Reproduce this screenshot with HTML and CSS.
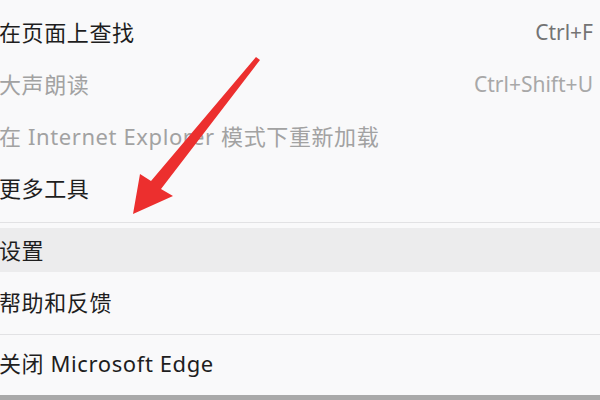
FILE: index.html
```html
<!DOCTYPE html>
<html lang="zh-CN">
<head>
<meta charset="utf-8">
<title>Edge 菜单</title>
<link rel="stylesheet" href="styles.css">
</head>
<body>
<div class="page">
  <div class="menu">
    <div class="group first">
      <div class="item"><span class="label">在页面上查找</span><span class="key">Ctrl+F</span></div>
      <div class="item disabled"><span class="label">大声朗读</span><span class="key">Ctrl+Shift+U</span></div>
      <div class="item disabled"><span class="label">在 Internet Explorer 模式下重新加载</span></div>
      <div class="item"><span class="label">更多工具</span></div>
    </div>
    <div class="sep sep-a"></div>
    <div class="group">
      <div class="item active"><span class="label">设置</span></div>
      <div class="item"><span class="label">帮助和反馈</span></div>
    </div>
    <div class="sep sep-b"></div>
    <div class="group">
      <div class="item"><span class="label">关闭 Microsoft Edge</span></div>
    </div>
  </div>
  <div class="bottom-band"></div>
  <svg class="arrow" width="600" height="400" viewBox="0 0 600 400" aria-hidden="true">
    <polygon points="256,57 260,60 161,189 173,196 133,214 140,174 151,181" fill="#ec2f2e"/>
  </svg>
</div>
</body>
</html>
```
FILE: styles.css
```css
html, body {
  margin: 0;
  padding: 0;
}
body {
  width: 600px;
  height: 400px;
  overflow: hidden;
  background: #f9f9fa;
  font-family: "Noto Sans", "Noto Sans CJK SC", sans-serif;
}
.page {
  position: relative;
  width: 600px;
  height: 400px;
  display: flex;
  flex-direction: column;
}
.menu {
  flex: 1;
  display: flex;
  flex-direction: column;
  padding-top: 6px;
}
.group {
  display: flex;
  flex-direction: column;
}
.item {
  height: 44px;
  margin: 4px 0;
  display: flex;
  align-items: center;
  justify-content: space-between;
  padding: 0 7px 0 0;
  font-family: "Noto Sans", "Noto Sans CJK SC", sans-serif;
  font-size: 22px;
  letter-spacing: 0.6px;
  color: #1e1e1e;
  white-space: nowrap;
}
.item .label {
  margin-left: -1px;
  position: relative;
  top: -1px;
}
.item .key {
  font-size: 21px;
  letter-spacing: 0;
  color: #747474;
}
.item.disabled .label {
  color: #a2a2a2;
}
.item.disabled .key {
  color: #a8a8a8;
}
.item.active {
  background: #ececed;
}
.sep {
  height: 1px;
  background: #e2e2e4;
}
.sep-a {
  margin: 8px 0 1px;
}
.sep-b {
  margin: 6px 0 2px;
}
.bottom-band {
  height: 5px;
  background: #a9a9a9;
}
.arrow {
  position: absolute;
  left: 0;
  top: 0;
  pointer-events: none;
}
```
